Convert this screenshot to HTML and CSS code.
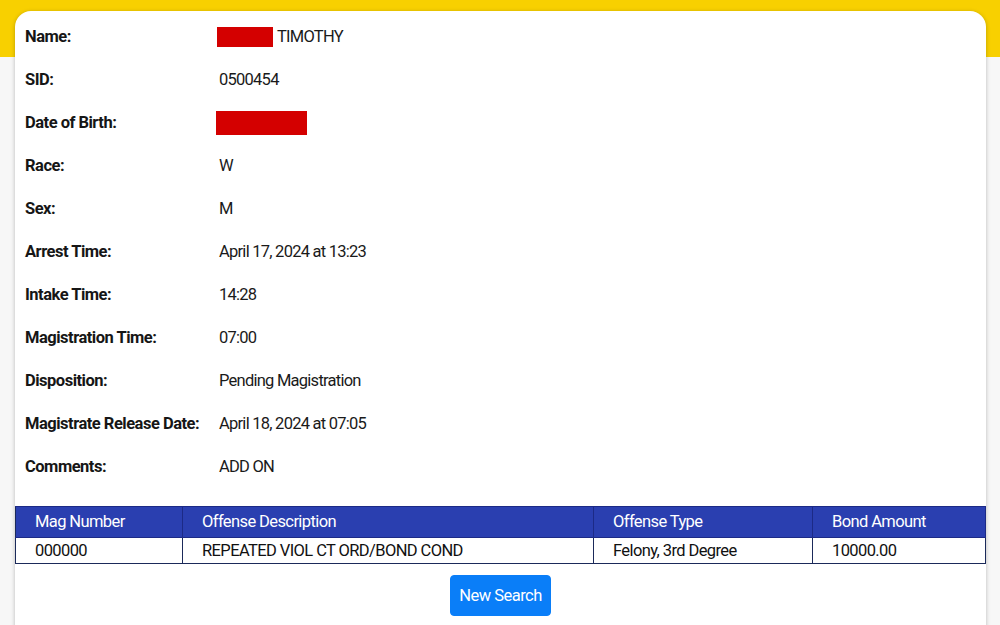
FILE: index.html
```html
<html lang="en">
  <head>
    <meta charset="UTF-8" />
    <meta name="viewport" content="width=device-width, initial-scale=1.0" />
    <title>Inmate Details</title>
    <link rel="stylesheet" href="styles.css">
  </head>

  <body>
    <div class="band"></div>
    <div class="page">
      <div class="card">
        <div class="details">
          <div class="row">
            <div class="label">Name:</div>
            <div class="value"><span class="redact redactName"></span>TIMOTHY</div>
          </div>
          <div class="row">
            <div class="label">SID:</div>
            <div class="value">0500454</div>
          </div>
          <div class="row">
            <div class="label">Date of Birth:</div>
            <div class="value"><span class="redact redactDob"></span></div>
          </div>
          <div class="row">
            <div class="label">Race:</div>
            <div class="value">W</div>
          </div>
          <div class="row">
            <div class="label">Sex:</div>
            <div class="value">M</div>
          </div>
          <div class="row">
            <div class="label">Arrest Time:</div>
            <div class="value">April 17, 2024 at 13:23</div>
          </div>
          <div class="row">
            <div class="label">Intake Time:</div>
            <div class="value">14:28</div>
          </div>
          <div class="row">
            <div class="label">Magistration Time:</div>
            <div class="value">07:00</div>
          </div>
          <div class="row">
            <div class="label">Disposition:</div>
            <div class="value">Pending Magistration</div>
          </div>
          <div class="row">
            <div class="label">Magistrate Release Date:</div>
            <div class="value">April 18, 2024 at 07:05</div>
          </div>
          <div class="row">
            <div class="label">Comments:</div>
            <div class="value">ADD ON</div>
          </div>
        </div>

        <table class="charges">
          <thead>
            <tr>
              <th class="colMag">Mag Number</th>
              <th class="colDesc">Offense Description</th>
              <th class="colType">Offense Type</th>
              <th>Bond Amount</th>
            </tr>
          </thead>
          <tbody>
            <tr>
              <td>000000</td>
              <td>REPEATED VIOL CT ORD/BOND COND</td>
              <td>Felony, 3rd Degree</td>
              <td>10000.00</td>
            </tr>
          </tbody>
        </table>

        <div class="actions">
          <input type="button" class="btn" value="New Search" />
        </div>
      </div>
    </div>
  </body>
</html>
```

FILE: styles.css
```css
body {
  margin: 0;
  background-color: #f7f7f7;
  font-family: Roboto, "Open Sans", sans-serif;
  color: #111;
  overflow: hidden;
}

.band {
  height: 57px;
  background-color: #f8d000;
}

.page {
  margin-top: -46px;
  padding: 0 14px 0 15px;
}

.card {
  background-color: white;
  border-radius: 16px;
  box-shadow: 0 1px 4px rgba(0, 0, 0, 0.25);
  height: 640px;
}

.details {
  padding: 14px 10px 0 10px;
}

.row {
  display: flex;
  height: 43px;
  align-items: flex-start;
  font-size: 16.5px;
  line-height: 24px;
  letter-spacing: -0.5px;
}

.label {
  width: 194px;
  font-weight: bold;
  color: #161616;
}

.value {
  display: flex;
  align-items: center;
  letter-spacing: -0.75px;
  color: #1a1a1a;
}

.redact {
  display: inline-block;
  background-color: #d40000;
}

.redactName {
  width: 56px;
  height: 20px;
  margin: 0 4px 0 -2px;
}

.redactDob {
  width: 91px;
  height: 24px;
  margin: 0 0 0 -3px;
}

.charges {
  width: 100%;
  margin-top: 8px;
  border-collapse: collapse;
  font-size: 16.5px;
  line-height: 22px;
  letter-spacing: -0.6px;
}

.charges th {
  background-color: #2a3fb0;
  color: white;
  font-weight: normal;
  text-align: left;
  padding: 4px 19px;
  border: 1px solid #1c2a86;
  border-left-color: #4a5cc0;
}

.charges td {
  padding: 2px 19px 1px 19px;
  border: 1px solid #1b2a5a;
  border-top: none;
  border-left-color: #7f93b8;
}

.charges th:first-child,
.charges td:first-child {
  border-left-color: #1b2a5a;
}

.colMag {
  width: 128px;
}

.colDesc {
  width: 372px;
}

.colType {
  width: 180px;
}

.actions {
  display: flex;
  justify-content: center;
  padding-top: 11px;
}

.btn {
  background-color: #0a7ef8;
  color: white;
  border: 1px solid #0a7ef8;
  border-radius: 4px;
  width: 101px;
  height: 41px;
  font-family: Roboto, "Open Sans", sans-serif;
  font-size: 16.5px;
  letter-spacing: -0.5px;
  cursor: pointer;
}
```
